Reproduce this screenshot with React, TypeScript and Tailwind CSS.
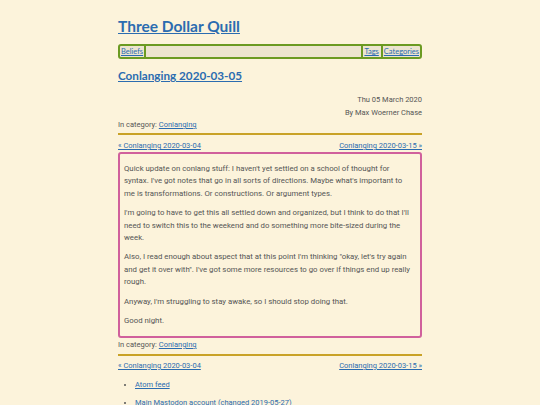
export default function App() {
  const link = "text-[#2b6cb0] underline";
  return (
    <div className="min-h-screen bg-[#fcf3db] text-[#555] font-['Roboto',sans-serif]">
      <div className="mx-auto w-[304px] pt-[14px]">
        <h1 className="font-['Lato',sans-serif] text-[15.5px] font-bold leading-[24px]">
          <a href="#" className={link}>Three Dollar Quill</a>
        </h1>

        <nav className="mt-[6px] flex h-[15px] items-center rounded-[3px] border-2 border-[#6b9a22] bg-[#ece4cf] px-[1px] font-['Lato',sans-serif] text-[7.5px]">
          <a href="#" className={`${link} border-r-2 border-[#6b9a22] pr-[1px] leading-[11px]`}>Beliefs</a>
          <div className="flex-1" />
          <a href="#" className={`${link} border-l-2 border-[#6b9a22] px-[1px] leading-[11px]`}>Tags</a>
          <a href="#" className={`${link} ml-[1px] border-l-2 border-[#6b9a22] pl-[1px] leading-[11px]`}>Categories</a>
        </nav>

        <h2 className="mt-[7px] font-['Lato',sans-serif] text-[11.7px] font-bold leading-[18px]">
          <a href="#" className={link}>Conlanging 2020-03-05</a>
        </h2>

        <div className="mt-[10px] text-right text-[7.5px] leading-[12.5px]">
          <p>Thu 05 March 2020</p>
          <p>By Max Woerner Chase</p>
        </div>
        <p className="text-[7.5px] leading-[11px]">
          In category: <a href="#" className={link}>Conlanging</a>
        </p>

        <div className="mt-[3px] h-[2px] bg-[#c9a227]" />
        <div className="mt-[5px] flex justify-between text-[7.5px] leading-[12px]">
          <a href="#" className={link}>« Conlanging 2020-03-04</a>
          <a href="#" className={link}>Conlanging 2020-03-15 »</a>
        </div>

        <div className="rounded-[3px] border-2 border-[#d0609c] pl-[4px] pr-[6px] py-[2.2px] text-[7.8px] leading-[12.6px]">
          <p className="my-[6.5px]">Quick update on conlang stuff: I haven't yet settled on a school of thought for syntax. I've got notes that go in all sorts of directions. Maybe what's important to me is transformations. Or constructions. Or argument types.</p>
          <p className="my-[6.5px]">I'm going to have to get this all settled down and organized, but I think to do that I'll need to switch this to the weekend and do something more bite-sized during the week.</p>
          <p className="my-[6.5px]">Also, I read enough about aspect that at this point I'm thinking "okay, let's try again and get it over with". I've got some more resources to go over if things end up really rough.</p>
          <p className="my-[6.5px]">Anyway, I'm struggling to stay awake, so I should stop doing that.</p>
          <p className="my-[6.5px]">Good night.</p>
        </div>

        <p className="mt-[1px] text-[7.5px] leading-[12px]">
          In category: <a href="#" className={link}>Conlanging</a>
        </p>
        <div className="mt-[3px] h-[2px] bg-[#c9a227]" />
        <div className="mt-[4px] flex justify-between text-[7.5px] leading-[12px]">
          <a href="#" className={link}>« Conlanging 2020-03-04</a>
          <a href="#" className={link}>Conlanging 2020-03-15 »</a>
        </div>

        <ul className="mt-[7px] list-disc pl-[17px] text-[7.5px] leading-[12px]">
          <li className="mb-[6px]"><a href="#" className={link}>Atom feed</a></li>
          <li className="mb-[6px]"><a href="#" className={link}>Main Mastodon account (changed 2019-05-27)</a></li>
        </ul>
      </div>
    </div>
  );
}
